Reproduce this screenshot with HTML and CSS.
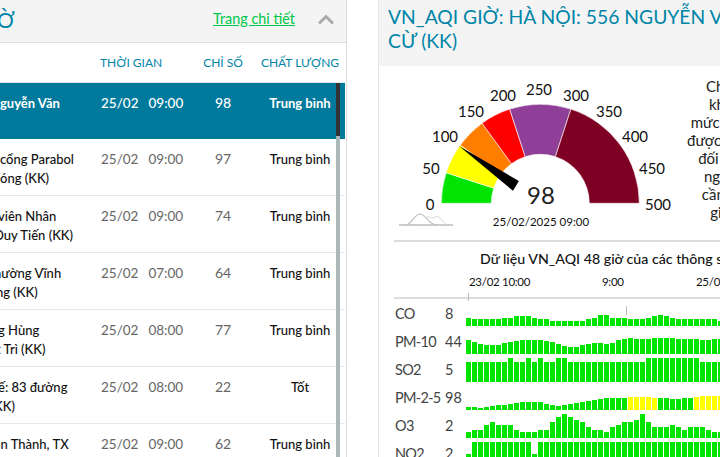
FILE: index.html
```html
<!DOCTYPE html>
<html lang="vi">
<head>
<meta charset="utf-8">
<title>VN_AQI</title>
<link rel="stylesheet" href="styles.css">
</head>
<body>
<div class="page">
  <section class="list-panel">
    <header class="list-head">
      <h2 class="list-title">Ờ</h2>
      <a class="detail-link" href="#">Trang chi tiết</a>
      <svg class="chevron" width="16" height="11" viewBox="0 0 16 11"><path d="M1 9.5 8 2.5 15 9.5" fill="none" stroke="#aaa" stroke-width="3"/></svg>
    </header>
    <div class="grid-row col-head">
      <span></span><span>THỜI GIAN</span><span class="center">CHỈ SỐ</span><span class="center">CHẤT LƯỢNG</span>
    </div>
    <div class="rows">
      <div class="scroll-track"><div class="scroll-thumb"></div></div>
      <div class="grid-row row selected">
        <div class="name"><span>guyễn Văn</span></div><div class="time"><span>25/02</span><span>09:00</span></div><div class="center count">98</div><div class="center quality">Trung bình</div>
      </div>
      <div class="grid-row row">
        <div class="name"><span>cổng Parabol</span><span>óng (KK)</span></div><div class="time"><span>25/02</span><span>09:00</span></div><div class="center value">97</div><div class="center quality">Trung bình</div>
      </div>
      <div class="grid-row row">
        <div class="name"><span class="cut-2">viên Nhân</span><span class="cut-6">Duy Tiến (KK)</span></div><div class="time"><span>25/02</span><span>09:00</span></div><div class="center value">74</div><div class="center quality">Trung bình</div>
      </div>
      <div class="grid-row row">
        <div class="name"><span class="cut-6">hường Vĩnh</span><span class="cut-4">ng (KK)</span></div><div class="time"><span>25/02</span><span>07:00</span></div><div class="center value">64</div><div class="center quality">Trung bình</div>
      </div>
      <div class="grid-row row">
        <div class="name"><span class="cut-2">g Hùng</span><span class="cut-4">t Trì (KK)</span></div><div class="time"><span>25/02</span><span>08:00</span></div><div class="center value">77</div><div class="center quality">Trung bình</div>
      </div>
      <div class="grid-row row">
        <div class="name"><span class="cut-2">ế: 83 đường</span><span class="cut-6">KK)</span></div><div class="time"><span>25/02</span><span>08:00</span></div><div class="center value">22</div><div class="center quality">Tốt</div>
      </div>
      <div class="grid-row row">
        <div class="name"><span class="cut-6">an Thành, TX</span></div><div class="time"><span>25/02</span><span>09:00</span></div><div class="center value">62</div><div class="center quality">Trung bình</div>
      </div>
    </div>
  </section>

  <section class="detail-panel">
    <header class="detail-head">
      <h1 class="detail-title">VN_AQI GIỜ: HÀ NỘI: 556 NGUYỄN VĂN CỪ (KK)</h1>
    </header>
    <div class="gauge-row">
      <svg class="gauge" width="290" height="174" viewBox="394 66 290 174">
        <g stroke="#fff" stroke-width="0.6">
          <path fill="#00e400" d="M441.3 203.3A99 99 0 0 1 446.2 172.7L493.7 188.2A49 49 0 0 0 491.3 203.3Z"/>
          <path fill="#ffff00" d="M446.2 172.7A99 99 0 0 1 460.2 145.1L500.7 174.5A49 49 0 0 0 493.7 188.2Z"/>
          <path fill="#ff7e00" d="M460.2 145.1A99 99 0 0 1 482.1 123.2L511.5 163.7A49 49 0 0 0 500.7 174.5Z"/>
          <path fill="#ff0000" d="M482.1 123.2A99 99 0 0 1 509.7 109.1L525.2 156.7A49 49 0 0 0 511.5 163.7Z"/>
          <path fill="#8f3f97" d="M509.7 109.1A99 99 0 0 1 570.9 109.1L555.4 156.7A49 49 0 0 0 525.2 156.7Z"/>
          <path fill="#7e0023" d="M570.9 109.1A99 99 0 0 1 639.3 203.3L589.3 203.3A49 49 0 0 0 555.4 156.7Z"/>
        </g>
        <polygon points="459,146 518.9,181 513,190.8" fill="#000"/>
        <g class="scale">
          <text x="430" y="210">0</text>
          <text x="431" y="174">50</text>
          <text x="445" y="142">100</text>
          <text x="471" y="117">150</text>
          <text x="503" y="101">200</text>
          <text x="539" y="95">250</text>
          <text x="576" y="101">300</text>
          <text x="609" y="117">350</text>
          <text x="635" y="142">400</text>
          <text x="652" y="174">450</text>
          <text x="658" y="210">500</text>
        </g>
        <text class="reading" x="541" y="204">98</text>
        <text class="stamp" x="541" y="226">25/02/2025 09:00</text>
        <g fill="none" stroke="#bdbdbd">
          <path d="M399 225H453" stroke-width="1.6"/>
          <path d="M407 225C413 222 415 214 420 214C426 214 428 225 437 225" stroke-width="1.1"/>
          <path d="M425 218C429 215 432 220 435 217C439 214 442 222 447 225" stroke-width="0.9" stroke="#d0d0d0"/>
        </g>
      </svg>
      <p class="advice">Chỉ số AQI<br>không khí<br>mức chấp nhận<br>được. Tuy nhiên,<br>đối với nhóm<br>người nhạy<br>cần hạn chế<br>giảm bớt.</p>
    </div>
    <div class="chart">
      <h3 class="chart-title">Dữ liệu VN_AQI 48 giờ của các thông số</h3>
      <div class="time-axis"><span class="t1">23/02 10:00</span><span class="t2">9:00</span><span>25/02 8:00</span></div>
      <i class="tick tick-a"></i><i class="tick tick-b"></i>
      <div id="series" class="series"></div>
    </div>
  </section>
</div>
<script src="chart.js"></script>
</body>
</html>
```

FILE: styles.css
```css
* { box-sizing: border-box; }
html, body { margin: 0; padding: 0; background: #fff; }
body { font-family: Lato, "Noto Sans", sans-serif; color: #222; }
.page { display: flex; width: 720px; height: 457px; overflow: hidden; }

.list-panel { flex: 0 0 347px; height: 457px; border-right: 1px solid #ddd; overflow: hidden; }
.list-head { display: flex; align-items: center; height: 43px; background: #f4f4f4; border-bottom: 1px solid #ddd; }
.list-title { margin: 0 0 3px -3px; font-size: 21px; line-height: 23px; font-weight: 400; color: #0085a8; flex: 1; }
.detail-link { font-size: 14.4px; color: #00c84a; text-decoration: underline; margin: 0 23px 6px 0; }
.chevron { margin: 0 12px 3px 0; }

.grid-row { display: grid; grid-template-columns: 100px 94px 58px 96px; width: 345px; }
.center { text-align: center; }
.col-head { height: 40px; align-items: center; font-size: 12px; color: #0085a8; border-bottom: 1px solid #e6e6e6; padding-bottom: 1px; }

.rows { position: relative; }
.scroll-track { position: absolute; left: 336px; top: 0; width: 4px; height: 374px; background: #adb9b8; z-index: 2; }
.scroll-thumb { height: 53px; background: #333; }
.row { height: 57px; padding-top: 11px; font-size: 13px; line-height: 18.5px; border-bottom: 1px solid #e8e8e8; }
.row.selected { height: 56px; background: #007a9c; color: #fff; border-bottom: 0; }
.name { color: #111; white-space: nowrap; font-weight: 500; }
.name span { display: block; }
.cut-2 { margin-left: -2px; }
.cut-4 { margin-left: -4px; }
.cut-6 { margin-left: -6px; }
.selected .name { color: #fff; font-weight: 700; }
.time { display: flex; gap: 10px; padding-left: 1px; color: #666; font-size: 13.5px; }
.selected .time { color: #fff; font-weight: 500; }
.value { color: #666; font-size: 14px; }
.count { font-size: 14px; font-weight: 500; }
.quality { font-weight: 500; color: #111; }
.selected .quality { color: #fff; font-weight: 700; }

.detail-panel { flex: 0 0 auto; width: 420px; margin-left: 31px; border-left: 1px solid #e6e6e6; }
.detail-head { height: 66px; background: #f4f4f4; padding: 5px 0 0 9px; }
.detail-title { margin: 0; width: 385px; font-size: 19.3px; line-height: 24px; font-weight: 400; color: #0085a8; }
.gauge-row { display: flex; height: 174px; padding-left: 15px; }
.gauge { flex: none; display: block; }
.scale text { font-size: 15px; text-anchor: middle; fill: #111; }
.reading { font-size: 24px; text-anchor: middle; fill: #222; }
.stamp { font-size: 11.5px; text-anchor: middle; fill: #111; }
.advice { flex: none; width: 110px; margin: 11px 0 0 2px; font-size: 15px; line-height: 18px; text-align: center; color: #222; }

.chart { position: relative; margin-left: 15px; border-top: 2px solid #ddd; }
.chart-title { margin: 0; padding: 8px 0 0 86px; font-size: 14.2px; line-height: 18px; font-weight: 500; color: #111; white-space: nowrap; }
.time-axis { display: flex; height: 25px; margin-top: 6px; padding-left: 75px; font-size: 11.5px; letter-spacing: -0.3px; line-height: 16px; color: #111; border-bottom: 2px solid #ddd; white-space: nowrap; }
.t1 { width: 133px; }
.t2 { width: 94px; }
.tick { position: absolute; width: 1px; background: #bbb; }
.tick-a { left: 74px; top: 51px; height: 8px; }
.tick-b { left: 232px; top: 64px; height: 9px; }

.series { display: flex; flex-direction: column; gap: 2px; padding-top: 1px; }
.serie { display: flex; align-items: flex-end; height: 26px; }
.serie-name { flex: 0 0 50px; margin-left: 1px; align-self: center; font-size: 14.5px; letter-spacing: -0.7px; color: #444; white-space: nowrap; }
.serie-value { flex: 0 0 21px; align-self: center; font-size: 14.5px; color: #444; }
.bars { display: flex; align-items: flex-end; gap: 1px; height: 24px; }
.bar { flex: 0 0 5px; background: #00e400; }
.bar.warn { background: #ffff00; }
```

FILE: chart.js
```js
var data = [
  { name: 'CO', value: 8, bars: [8,7,7,7,7,7,8,8,10,10,10,8,7,7,5,5,5,5,5,5,7,8,11,11,8,8,8,7,7,7,8,10,11,10,8,7,7,7,7,7,7,7,5,5] },
  { name: 'PM-10', value: 44, bars: [14,12,10,9,9,9,11,12,13,14,14,14,14,13,12,10,8,7,7,9,10,11,11,10,11,14,15,16,15,15,15,16,16,16,16,15,15,15,15,14,14,15,15] },
  { name: 'SO2', value: 5, bars: [20,20,20,20,20,20,20,24,20,20,24,20,24,20,20,24,24,20,20,20,20,20,20,20,20,20,20,20,20,20,24,24,24,24,24,24,24,24,24,20,20,20,20] },
  { name: 'PM-2-5', value: 98, warnFrom: [[27,31],[38,42]], bars: [3,3,2,3,4,5,5,6,7,8,8,8,8,6,5,4,5,6,7,8,9,10,11,12,12,12,12,13,13,13,13,12,12,12,11,11,12,12,13,14,14,14,14] },
  { name: 'O3', value: 2, bars: [6,8,8,13,16,13,13,13,8,6,6,6,8,8,16,21,24,21,18,16,11,8,8,6,11,13,16,16,18,24,16,11,11,11,13,11,8,11,11,11,8,6,6] },
  { name: 'NO2', value: 2, bars: [12,24,24,24,24,24,24,24,24,24,24,12,24,24,24,24,24,24,24,24,24,24,24,24,24,24,24,24,24,24,24,24,24,24,24,24,24,24,24,24,24,24,24] }
];

var host = document.getElementById('series');
data.forEach(function (s) {
  var row = document.createElement('div');
  row.className = 'serie';
  var name = document.createElement('span');
  name.className = 'serie-name';
  name.textContent = s.name;
  var value = document.createElement('span');
  value.className = 'serie-value';
  value.textContent = s.value;
  var bars = document.createElement('div');
  bars.className = 'bars';
  s.bars.slice(0, 43).forEach(function (h, i) {
    var bar = document.createElement('div');
    var warn = (s.warnFrom || []).some(function (r) { return i >= r[0] && i <= r[1]; });
    bar.className = warn ? 'bar warn' : 'bar';
    bar.style.height = h + 'px';
    bars.appendChild(bar);
  });
  row.appendChild(name);
  row.appendChild(value);
  row.appendChild(bars);
  host.appendChild(row);
});
```
